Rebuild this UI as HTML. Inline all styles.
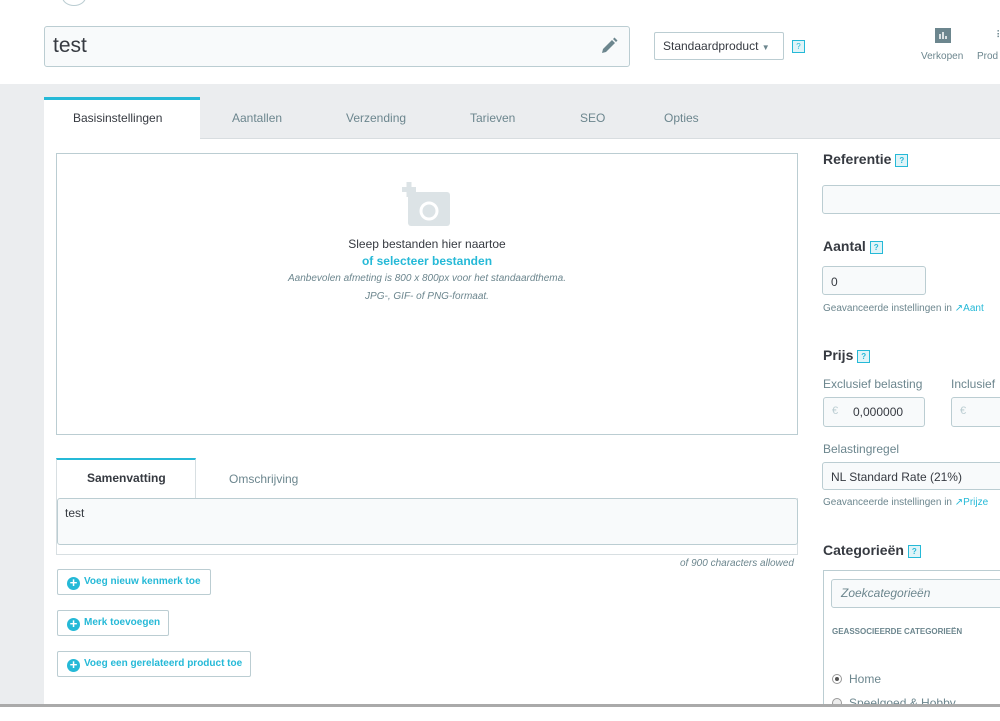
<!DOCTYPE html>
<html><head><meta charset="utf-8"><style>
*{box-sizing:border-box;margin:0;padding:0}
body{width:1000px;height:721px;overflow:hidden;background:#fff;font-family:"Liberation Sans","DejaVu Sans",sans-serif;color:#363a41;position:relative}
.a{position:absolute}
.help{display:inline-block;width:13px;height:13px;border:1px solid #25b9d7;background:#e0f4f8;color:#25b9d7;font-size:8px;text-align:center;line-height:11px;vertical-align:middle}
.inp{position:absolute;border:1px solid #bbcdd2;border-radius:3px;background:#f8fafb}
.t{font-size:12px;color:#6c868e}
.btn{position:absolute;border:1px solid #bbcdd2;border-radius:2px;background:#fff;color:#25b9d7;font-size:10px;font-weight:bold;padding:0 0 0 9px;height:26px;line-height:24px;white-space:nowrap}
.btn i{display:inline-block;width:13px;height:13px;border-radius:50%;background:#25b9d7;color:#fff;font-style:normal;font-size:13px;line-height:12px;text-align:center;margin-right:4px;vertical-align:-3px}
</style></head><body>
<div class="a" style="left:62px;top:-12px;width:24px;height:18px;border:1px solid #bbcdd2;border-radius:50%;background:#fff"></div>
<div class="inp" style="left:44px;top:26px;width:586px;height:41px;"></div>
<div class="a" style="left:53px;top:34px;font-size:21px;color:#363a41">test</div>
<svg class="a" style="left:599px;top:36px" width="20" height="20" viewBox="0 0 20 20"><path d="M3 17l1-4 9-9 3 3-9 9z M14 3l1.5-1.5 3 3L17 6z" fill="#6c868e"/></svg>
<div class="a" style="left:654px;top:32px;width:130px;height:28px;border:1px solid #bbcdd2;border-radius:2px;font-size:12px;line-height:26px;padding-left:8px">Standaardproduct <span style="font-size:8px;color:#6c868e">&#9660;</span></div>
<span class="help a" style="left:792px;top:40px">?</span>
<div class="a" style="left:935px;top:28px;width:16px;height:15px;background:#6c868e"><svg width="16" height="15"><path d="M5 11V6M8 11V4M11 11V8" stroke="#fff" stroke-width="1.5"/></svg></div>
<div class="a" style="left:921px;top:51px;font-size:10px;color:#6c868e">Verkopen</div>
<div class="a" style="left:977px;top:51px;font-size:10px;color:#6c868e">Prod</div>
<div class="a" style="left:996px;top:30px;font-size:10px;color:#6c868e">⠿</div>
<div class="a" style="left:0;top:84px;width:1000px;height:620px;background:#ebedef"></div>
<div class="a" style="left:44px;top:139px;width:956px;height:565px;background:#fff"></div>
<div class="a" style="left:44px;top:138px;width:956px;height:1px;background:#d8dde0"></div>
<div class="a" style="left:44px;top:97px;width:156px;height:43px;background:#fff;border-top:3px solid #25b9d7"></div>
<div class="a" style="left:73px;top:111px;font-size:12px;color:#363a41">Basisinstellingen</div>
<div class="a t" style="left:232px;top:111px">Aantallen</div>
<div class="a t" style="left:346px;top:111px">Verzending</div>
<div class="a t" style="left:470px;top:111px">Tarieven</div>
<div class="a t" style="left:580px;top:111px">SEO</div>
<div class="a t" style="left:664px;top:111px">Opties</div>
<div class="a" style="left:56px;top:153px;width:742px;height:282px;border:1px solid #bbcdd2"></div>
<svg class="a" style="left:402px;top:182px" width="50" height="46" viewBox="0 0 50 46"><rect x="6" y="10" width="42" height="34" rx="3" fill="#dce3e6"/><rect x="0" y="5" width="14" height="5" fill="#dce3e6"/><rect x="4.5" y="0" width="5" height="15" fill="#dce3e6"/><circle cx="27" cy="29" r="8" fill="none" stroke="#fff" stroke-width="3"/></svg>
<div class="a" style="left:56px;top:237px;width:742px;text-align:center;font-size:12px">Sleep bestanden hier naartoe</div>
<div class="a" style="left:56px;top:254px;width:742px;text-align:center;font-size:12px;font-weight:bold;color:#25b9d7">of selecteer bestanden</div>
<div class="a" style="left:56px;top:273px;width:742px;text-align:center;font-size:10px;font-style:italic;color:#6c868e">Aanbevolen afmeting is 800 x 800px voor het standaardthema.</div>
<div class="a" style="left:56px;top:291px;width:742px;text-align:center;font-size:10px;font-style:italic;color:#6c868e">JPG-, GIF- of PNG-formaat.</div>
<div class="a" style="left:56px;top:498px;width:742px;height:57px;border:1px solid #d8dfe2;border-top:none"></div>
<div class="a" style="left:56px;top:458px;width:140px;height:41px;background:#fff;border-top:2px solid #25b9d7;border-left:1px solid #d8dfe2;border-right:1px solid #d8dfe2"></div>
<div class="a" style="left:87px;top:471px;font-size:12px;font-weight:bold;color:#363a41">Samenvatting</div>
<div class="a t" style="left:229px;top:472px">Omschrijving</div>
<div class="inp" style="left:57px;top:498px;width:741px;height:47px"></div>
<div class="a" style="left:65px;top:506px;font-size:12px">test</div>
<div class="a" style="left:680px;top:558px;font-size:10px;font-style:italic;color:#6c868e">of 900 characters allowed</div>
<div class="btn" style="left:57px;top:569px;width:154px"><i>+</i>Voeg nieuw kenmerk toe</div>
<div class="btn" style="left:57px;top:610px;width:112px"><i>+</i>Merk toevoegen</div>
<div class="btn" style="left:57px;top:651px;width:194px"><i>+</i>Voeg een gerelateerd product toe</div>
<div class="a" style="left:823px;top:151px;font-size:14px;font-weight:bold;color:#363a41">Referentie <span class="help">?</span></div>
<div class="inp" style="left:822px;top:185px;width:200px;height:29px"></div>
<div class="a" style="left:823px;top:238px;font-size:14px;font-weight:bold">Aantal <span class="help">?</span></div>
<div class="inp" style="left:822px;top:266px;width:104px;height:29px"></div>
<div class="a" style="left:831px;top:275px;font-size:12px">0</div>
<div class="a" style="left:823px;top:303px;font-size:10px;color:#6c868e">Geavanceerde instellingen in <span style="color:#25b9d7">&#8599;Aant</span></div>
<div class="a" style="left:823px;top:347px;font-size:14px;font-weight:bold">Prijs <span class="help">?</span></div>
<div class="a t" style="left:823px;top:377px">Exclusief belasting</div>
<div class="a t" style="left:951px;top:377px">Inclusief</div>
<div class="inp" style="left:823px;top:397px;width:102px;height:30px"></div>
<div class="a" style="left:832px;top:405px;font-size:11px;color:#bbcdd2">€</div>
<div class="a" style="left:853px;top:405px;font-size:12px">0,000000</div>
<div class="inp" style="left:951px;top:397px;width:60px;height:30px"></div>
<div class="a" style="left:960px;top:405px;font-size:11px;color:#bbcdd2">€</div>
<div class="a t" style="left:823px;top:442px">Belastingregel</div>
<div class="inp" style="left:822px;top:462px;width:200px;height:28px"></div>
<div class="a" style="left:831px;top:470px;font-size:12px">NL Standard Rate (21%)</div>
<div class="a" style="left:823px;top:497px;font-size:10px;color:#6c868e">Geavanceerde instellingen in <span style="color:#25b9d7">&#8599;Prijze</span></div>
<div class="a" style="left:823px;top:542px;font-size:14px;font-weight:bold">Categorieën <span class="help">?</span></div>
<div class="a" style="left:823px;top:570px;width:200px;height:150px;border:1px solid #bbcdd2"></div>
<div class="inp" style="left:831px;top:579px;width:190px;height:29px"></div>
<div class="a" style="left:841px;top:586px;font-size:12px;font-style:italic;color:#6c868e">Zoekcategorieën</div>
<div class="a" style="left:832px;top:627px;font-size:8px;font-weight:bold;color:#6c868e">GEASSOCIEERDE CATEGORIEËN</div>
<div class="a" style="left:832px;top:674px;width:10px;height:10px;border:1px solid #999;border-radius:50%;background:#fff"><div style="margin:2px;width:4px;height:4px;border-radius:50%;background:#555"></div></div>
<div class="a" style="left:849px;top:672px;font-size:12px;color:#6c868e">Home</div>
<div class="a" style="left:832px;top:698px;width:10px;height:10px;border:1px solid #999;border-radius:50%;background:#eee"></div>
<div class="a" style="left:849px;top:696px;font-size:12px;color:#6c868e">Speelgoed &amp; Hobby</div>
<div class="a" style="left:0;top:704px;width:1000px;height:3px;background:#aaa"></div>
<div class="a" style="left:0;top:707px;width:1000px;height:14px;background:#fff"></div>
</body></html>
